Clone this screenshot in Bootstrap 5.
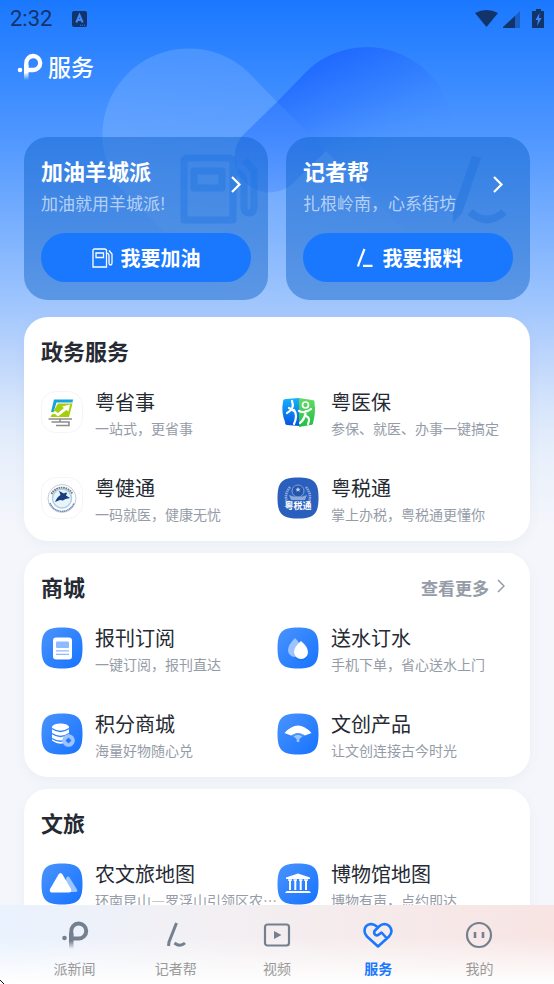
<!DOCTYPE html>
<html lang="zh-CN">
<head>
<meta charset="utf-8">
<meta name="viewport" content="width=device-width, initial-scale=1">
<title>服务</title>
<link rel="stylesheet" href="https://cdn.jsdelivr.net/npm/bootstrap@5.3.0/dist/css/bootstrap.min.css">
<style>
  body { font-family: "Noto Sans CJK SC", sans-serif; color: #252a33; background: #f4f6fb; }
  a { color: inherit; text-decoration: none; }
  svg { display: block; flex: none; }
  .app-shell { background: linear-gradient(180deg, #1a78ff 0, #4f97ff 137px, #a2c7fd 310px, #bcd5fc 355px, #d8e6fb 410px, #e9f0fb 460px, #f4f6fb 530px); }
  .hero-art { top: 0; left: 0; pointer-events: none; }
  .status-bar { height: 38px; gap: 20px; padding: 0 9px 0 10px; color: #12346b; font: 22px/38px Roboto, sans-serif; }
  .page-title { height: 57px; gap: 5px; padding-left: 16px; margin-bottom: 42px; color: #fff; font-size: 23px; line-height: 56px; font-weight: 500; }
  .page-title span { padding-bottom: 2px; }
  .gutter { padding: 0 24px; }
  .scroll-area { min-height: 0; overflow-y: auto; scrollbar-width: none; }
  .scroll-area::-webkit-scrollbar { display: none; }
  .hero-grid { display: grid; grid-template-columns: 1fr 1fr; gap: 18px; margin-bottom: 17px; }
  .hero-card { padding: 16px 17px 18px; border-radius: 24px; background: rgba(10, 96, 199, .45); color: #fff; }
  .hero-card h2 { font-size: 22px; line-height: 34px; font-weight: 700; }
  .hero-card p { font-size: 17px; line-height: 32px; color: rgba(255, 255, 255, .62); white-space: nowrap; }
  .hero-mark { top: 16px; right: 10px; }
  .hero-btn { height: 49px; margin-top: 14px; background: #1a78ff; color: #fff; font-size: 20px; line-height: 30px; font-weight: 700; }
  .hero-btn:hover { background: #0f6cf0; color: #fff; }
  .panel { padding: 17px 17px 0; margin-bottom: 12px; border-radius: 24px; background: #fff; box-shadow: 0 4px 12px rgba(80, 90, 130, .05); }
  .panel h2 { margin-bottom: 2px; font-size: 22px; line-height: 33px; font-weight: 700; }
  .see-more { color: #959ca7; font-size: 17px; line-height: 35px; font-weight: 700; padding-right: 8px; }
  .service { height: 86px; gap: 12px; }
  .service-text { min-width: 0; padding-top: 4px; }
  .service-name { font-size: 20px; line-height: 28px; }
  .service-desc { font-size: 14px; line-height: 24px; color: #959ca7; }
  .tab-bar { height: 79px; background: linear-gradient(180deg, rgba(255,255,255,0) 40%, #fff 100%), linear-gradient(90deg, #e9f2fe 0, #f2f0f4 35%, #f6eaea 70%, #f7e4e3 100%); }
  .tab { flex: 1 1 0; padding-top: 15px; gap: 8px; font-size: 14px; line-height: 21px; color: #999; }
  .tab-icon { color: #75808f; }
  .tab.active, .tab.active .tab-icon { color: #1a78ff; }
  .tab.active { font-weight: 700; }
  .resize-mark { left: 0; bottom: 0; }
</style>
</head>
<body>
<div class="app-shell vh-100 d-flex flex-column position-relative overflow-hidden">

  <svg class="hero-art position-absolute" width="554" height="420" viewBox="0 0 554 420" aria-hidden="true">
    <defs>
      <linearGradient id="loopLight" gradientUnits="userSpaceOnUse" x1="160" y1="50" x2="240" y2="320">
        <stop offset="0" stop-color="#fff" stop-opacity=".14"/><stop offset=".45" stop-color="#fff" stop-opacity=".1"/><stop offset="1" stop-color="#fff" stop-opacity="0"/>
      </linearGradient>
      <linearGradient id="loopDark" gradientUnits="userSpaceOnUse" x1="320" y1="50" x2="380" y2="175">
        <stop offset="0" stop-color="#1a62ff" stop-opacity=".9"/><stop offset=".45" stop-color="#2f78ff" stop-opacity=".6"/><stop offset=".8" stop-color="#4089ff" stop-opacity=".1"/><stop offset="1" stop-color="#4f95ff" stop-opacity="0"/>
      </linearGradient>
      <linearGradient id="loopTail" gradientUnits="userSpaceOnUse" x1="290" y1="100" x2="290" y2="195">
        <stop offset="0" stop-color="#1f6cff" stop-opacity=".6"/><stop offset="1" stop-color="#1f6cff" stop-opacity=".22"/>
      </linearGradient>
      <linearGradient id="logoFade" x1="0" y1="0" x2="0" y2="1">
        <stop offset=".5" stop-color="#fff"/><stop offset="1" stop-color="#fff" stop-opacity="0"/>
      </linearGradient>
      <linearGradient id="tabFade" x1="0" y1="0" x2="0" y2="1">
        <stop offset=".5" stop-color="#75808f"/><stop offset="1" stop-color="#75808f" stop-opacity="0"/>
      </linearGradient>
    </defs>
    <path d="M277 102L248 72A86.300 86.300 0 0 0 126 194L252 320H495Z" fill="url(#loopLight)"/>
    <path d="M277 102L306 72A86.300 86.300 0 0 1 453 133L428 194H369Z" fill="url(#loopDark)"/>
    <path d="M277 102L241.500 136.500A35 35 0 0 0 290.500 185.500L326 151Z" fill="url(#loopTail)"/>
  </svg>

  <header class="position-relative">
    <div class="status-bar d-flex align-items-center">
      <span>2:32</span>
      <svg width="15" height="16" viewBox="0 0 15 16" aria-hidden="true"><rect width="15" height="16" rx="2" fill="#12346b"/><path d="M4.300 11.500L7.500 4L10.700 11.500M5.500 9H9.500" stroke="#3f88f5" stroke-width="2" fill="none"/><path d="M8 14.200h6" stroke="#3f88f5" stroke-width=".9" stroke-dasharray="1 1"/></svg>
      <svg class="ms-auto" width="70" height="22" viewBox="0 0 70 22" aria-hidden="true" fill="#12346b">
        <path d="M0 5Q11.500-1 23 5L11.500 19Z"/>
        <path d="M45 3V20H28Z" fill-opacity=".4"/><path d="M40 8V20H28V19Z"/>
        <path d="M61 1h5v2h3v17H57V3h4Z"/><path d="M64.500 5L60.500 12H63L62 18L66.500 10H64Z" fill="#3c87f8"/>
      </svg>
    </div>
    <h1 class="page-title d-flex align-items-center">
      <svg width="27" height="28" viewBox="0 0 27 28" aria-hidden="true">
        <circle cx="4" cy="17" r="2.300" fill="#fff"/><rect x="8" y="12" width="4.500" height="15" fill="url(#logoFade)"/>
        <path d="M10.250 18V10.500A7 7 0 1 1 17 17H12" fill="none" stroke="#fff" stroke-width="4.300"/>
      </svg>
      <span>服务</span>
    </h1>
  </header>

  <main class="scroll-area gutter flex-grow-1 position-relative">
    <div class="hero-grid">
      <section class="hero-card position-relative">
        <svg class="hero-mark position-absolute" width="78" height="72" viewBox="0 0 78 72" fill="none" stroke="#1c74e4" stroke-opacity=".4" stroke-width="7" stroke-linejoin="round" aria-hidden="true">
          <path d="M4 67V9Q4 5 8 5H48Q53 5 53 10V67ZM14 18H42V35H14ZM53 20Q63 18 64 29V53Q64 60 69 60T74 53V18L65 7"/>
        </svg>
        <a href="#" class="position-relative d-flex align-items-center justify-content-between">
          <div><h2 class="m-0">加油羊城派</h2><p class="m-0">加油就用羊城派!</p></div>
          <svg class="me-2 mb-1" width="12" height="18" viewBox="0 0 12 18" fill="none" stroke="#fff" stroke-width="2.200" aria-hidden="true"><path d="M1 2L8.500 9.500L1 17"/></svg>
        </a>
        <button type="button" class="hero-btn btn border-0 rounded-pill w-100 d-flex align-items-center justify-content-center gap-2 p-0 position-relative">
          <svg width="21" height="20" viewBox="0 0 21 20" fill="none" stroke="#fff" stroke-width="1.300" aria-hidden="true"><path d="M1 19V2.500Q1 1 2.500 1H12.500Q14.500 1 14.500 3V19ZM4 5H11.500V9.500H4ZM14.500 5.500Q17 5 17 8V15Q17 17 18.500 17T20 15V6L17 2.500"/></svg>
          <span>我要加油</span>
        </button>
      </section>
      <section class="hero-card position-relative">
        <svg class="hero-mark position-absolute" width="70" height="72" viewBox="0 0 70 72" fill="none" stroke="#1c6edb" stroke-opacity=".4" aria-hidden="true">
          <path d="M22 3L31 5L12 60L3 70L3 57Z" fill="#1c6edb" fill-opacity=".4" stroke="none"/><path d="M20 59Q37 74 54 59" stroke-width="7.500"/>
        </svg>
        <a href="#" class="position-relative d-flex align-items-center justify-content-between">
          <div><h2 class="m-0">记者帮</h2><p class="m-0">扎根岭南，心系街坊</p></div>
          <svg class="me-2 mb-1" width="12" height="18" viewBox="0 0 12 18" fill="none" stroke="#fff" stroke-width="2.200" aria-hidden="true"><path d="M1 2L8.500 9.500L1 17"/></svg>
        </a>
        <button type="button" class="hero-btn btn border-0 rounded-pill w-100 d-flex align-items-center justify-content-center gap-2 p-0 position-relative">
          <svg width="21" height="20" viewBox="0 0 21 20" fill="none" stroke="#fff" stroke-width="2.200" aria-hidden="true"><path d="M10.500 1L5 15L4 18.500M9 17.800H18.500"/></svg>
          <span>我要报料</span>
        </button>
      </section>
    </div>

    <section class="panel">
      <h2>政务服务</h2>
      <div class="row g-0">
        <a href="#" class="service col-6 d-flex align-items-center">
          <svg width="42" height="42" viewBox="0 0 42 42" aria-hidden="true">
            <rect x=".5" y=".5" width="41" height="41" rx="14" fill="#fff" stroke="#f4f5f7"/>
            <path d="M13 8.500H32L31.500 11.500H15.500L12.500 21H10Z" fill="#12a3e0"/><path d="M17 12.500H31.500L28 26H9.500L12.500 20Z" fill="#a5cf0a"/>
            <path d="M10 23.500L14 20L17 22L23 17L21 15.500L29 13.500L27.500 20.500L25.500 19L17 25.500L14 23Z" fill="#fff"/>
            <path d="M7.500 28H31M10.500 31H28V34.500H15M19 31V28" fill="none" stroke="#8d8d8d" stroke-width="1.600"/>
          </svg>
          <div class="service-text"><div class="service-name">粤省事</div><div class="service-desc text-truncate">一站式，更省事</div></div>
        </a>
        <a href="#" class="service col-6 d-flex align-items-center">
          <svg width="42" height="42" viewBox="0 0 42 42" aria-hidden="true">
            <defs><linearGradient id="medBlue" x1="0" y1="0" x2="0" y2="1"><stop stop-color="#16b2ff"/><stop offset="1" stop-color="#0553e0"/></linearGradient><linearGradient id="medGreen" x1="0" y1="0" x2="0" y2="1"><stop stop-color="#65dc63"/><stop offset="1" stop-color="#20bd4a"/></linearGradient></defs>
            <path d="M6 11Q6 8 9 8L22 7V35L10 34Q8 34 8 31Q4 21 6 11Z" fill="url(#medBlue)"/><path d="M22 7L35 9Q38 9 37.500 12Q39 21 36 32Q36 34 33 34L22 36Z" fill="url(#medGreen)"/>
            <path d="M15 10Q18 18 10 22M17 19Q21 24 17 33M17 20L12 17" stroke="#fff" stroke-width="2.200" fill="none" stroke-linecap="round"/>
            <circle cx="28.500" cy="14" r="3" stroke="#fff" stroke-width="1.700" fill="none"/><path d="M22 20Q28 23 34 18M29 20Q28 28 23 32M29 25Q34 27 31 33" stroke="#fff" stroke-width="2.200" fill="none" stroke-linecap="round"/>
          </svg>
          <div class="service-text"><div class="service-name">粤医保</div><div class="service-desc text-truncate">参保、就医、办事一键搞定</div></div>
        </a>
        <a href="#" class="service col-6 d-flex align-items-center">
          <svg width="42" height="42" viewBox="0 0 42 42" aria-hidden="true">
            <rect x=".5" y=".5" width="41" height="41" rx="14" fill="#fff" stroke="#f4f5f7"/>
            <circle cx="21" cy="21.500" r="14" fill="none" stroke="#b3bdd6" stroke-width=".8"/>
            <path d="M10.500 17A12 12 0 0 1 31.500 17" fill="none" stroke="#77777c" stroke-width="2.200" stroke-dasharray="1.600 .7"/>
            <path d="M9 26A12.800 12.800 0 0 0 33 26" fill="none" stroke="#7187b2" stroke-width="1.400" stroke-dasharray="1.500 .4"/>
            <circle cx="21" cy="21.500" r="9.500" fill="#e8f4f9" stroke="#a5d2e4" stroke-width="1.500"/>
            <path d="M14 25Q16 20 19.500 18L18 14L23 16.500Q25 15 26 16L25 18.500L29 21L24.500 22L22 23.500L19 23Z" fill="#193d80"/>
          </svg>
          <div class="service-text"><div class="service-name">粤健通</div><div class="service-desc text-truncate">一码就医，健康无忧</div></div>
        </a>
        <a href="#" class="service col-6 d-flex align-items-center">
          <svg width="42" height="42" viewBox="0 0 42 42" aria-hidden="true">
            <path d="M21 0.500C37 .5 41.500 5 41.500 21S37 41.500 21 41.500S.5 37 .5 21S5 .5 21 .5Z" fill="#2b5fbe"/>
            <path d="M13 10Q5 20 13 30M29 10Q37 20 29 30" fill="none" stroke="#8aa9dd" stroke-width="2.600" stroke-dasharray="1.500 .7"/>
            <circle cx="21" cy="14" r="6" fill="#2656ac" stroke="#7e9fd8" stroke-width="1"/><path d="M21 10l.8 1.700h1.700l-1.300 1.200.5 1.800-1.700-1-1.700 1 .5-1.800-1.300-1.200h1.700Z" fill="#c3d3ef"/><path d="M12 18Q21 22 30 18L28 23H14Z" fill="#8aa9dd"/>
            <text x="21" y="32" text-anchor="middle" font-size="9" font-weight="700" fill="#fff">粤税通</text>
          </svg>
          <div class="service-text"><div class="service-name">粤税通</div><div class="service-desc text-truncate">掌上办税，粤税通更懂你</div></div>
        </a>
      </div>
    </section>

    <section class="panel">
      <div class="d-flex justify-content-between">
        <h2>商城</h2>
        <a href="#" class="see-more d-flex align-items-center gap-2">查看更多 <svg class="mb-1" width="8" height="14" viewBox="0 0 8 14" fill="none" stroke="#959ca7" stroke-width="1.500" aria-hidden="true"><path d="M1 1L7 7L1 13"/></svg></a>
      </div>
      <div class="row g-0">
        <a href="#" class="service col-6 d-flex align-items-center">
          <svg width="42" height="42" viewBox="0 0 42 42" aria-hidden="true">
            <defs>
              <linearGradient id="tileBlue" x1="0" y1="0" x2="1" y2="1"><stop stop-color="#4a93fd"/><stop offset="1" stop-color="#1673ff"/></linearGradient>
              <path id="tile" d="M21 0.500C37 .5 41.500 5 41.500 21S37 41.500 21 41.500S.5 37 .5 21S5 .5 21 .5Z" fill="url(#tileBlue)"/>
            </defs>
            <use href="#tile"/>
            <rect x="12" y="11.500" width="19" height="22" rx="3" fill="#0c5cd8" opacity=".25"/><rect x="12" y="10.500" width="19" height="22" rx="3" fill="#fff"/><rect x="15" y="14.500" width="13" height="6.500" rx="1" fill="#8dbbff"/><path d="M15 23.800H28M15 27.300H28" stroke="#8dbbff" stroke-width="1.300"/>
          </svg>
          <div class="service-text"><div class="service-name">报刊订阅</div><div class="service-desc text-truncate">一键订阅，报刊直达</div></div>
        </a>
        <a href="#" class="service col-6 d-flex align-items-center">
          <svg width="42" height="42" viewBox="0 0 42 42" aria-hidden="true"><use href="#tile"/>
            <path d="M18 11Q25 18 25 23A7 7 0 0 1 11 23Q11 18 18 11Z" fill="#9cc5ff"/>
            <path d="M24 15Q31 22 31 27A7 7 0 0 1 17 27Q17 22 24 15Z" fill="#0c5cd8" opacity=".25"/><path d="M24 14Q31 20 31 25A7 7 0 0 1 17 25Q17 20 24 14Z" fill="#fff"/>
          </svg>
          <div class="service-text"><div class="service-name">送水订水</div><div class="service-desc text-truncate">手机下单，省心送水上门</div></div>
        </a>
        <a href="#" class="service col-6 d-flex align-items-center">
          <svg width="42" height="42" viewBox="0 0 42 42" aria-hidden="true"><use href="#tile"/>
            <path d="M11 14V27.500Q19.500 34 28 27.500V14Z" fill="#fff"/><ellipse cx="19.500" cy="14" rx="8.500" ry="3.500" fill="#fff"/>
            <path d="M11 15.500Q19.500 21.500 28 15.500M11 20.500Q19.500 26.500 28 20.500M11 25.500Q19.500 31 28 25.500" fill="none" stroke="#2f80fd" stroke-width="1.300"/>
            <circle cx="27.500" cy="27.500" r="6.300" fill="#9cc5ff"/><path d="M27.500 24.500L30.500 27.500L27.500 30.500L24.500 27.500Z" fill="#2479fb"/>
          </svg>
          <div class="service-text"><div class="service-name">积分商城</div><div class="service-desc text-truncate">海量好物随心兑</div></div>
        </a>
        <a href="#" class="service col-6 d-flex align-items-center">
          <svg width="42" height="42" viewBox="0 0 42 42" aria-hidden="true"><use href="#tile"/>
            <path d="M7.500 20Q21 5 34.500 20L28 22.500Q21 17.500 14 22.500Z" fill="#fff"/>
            <path d="M16.500 23.500Q21 20 25.500 23.500L22.300 26V29H19.700V26Z" fill="#9cc5ff"/><path d="M15.500 23Q21 18 26.500 23" fill="none" stroke="#6aa6fe" stroke-width="1"/>
          </svg>
          <div class="service-text"><div class="service-name">文创产品</div><div class="service-desc text-truncate">让文创连接古今时光</div></div>
        </a>
      </div>
    </section>

    <section class="panel">
      <h2>文旅</h2>
      <div class="row g-0">
        <a href="#" class="service col-6 d-flex align-items-center">
          <svg width="42" height="42" viewBox="0 0 42 42" aria-hidden="true"><use href="#tile"/>
            <path d="M25.500 14.500Q27 12.500 28.500 14.500L36 26.500Q37 29 34.500 29H22Z" fill="#9cc5ff"/>
            <path d="M17.500 11.500Q19.500 8.500 21.500 11.500L30 26Q31 29.500 28 29.500H11Q8 29.500 9 26Z" fill="#fff"/>
          </svg>
          <div class="service-text"><div class="service-name">农文旅地图</div><div class="service-desc text-truncate">环南昆山—罗浮山引领区农文旅地图</div></div>
        </a>
        <a href="#" class="service col-6 d-flex align-items-center">
          <svg width="42" height="42" viewBox="0 0 42 42" aria-hidden="true"><use href="#tile"/>
            <path d="M21 10.500L33 14.500V16H9V14.500ZM9.500 28H32.500L34 30H8Z" fill="#fff"/>
            <path d="M13 17V27M18.300 17V27M23.700 17V27M29 17V27" stroke="#fff" stroke-width="2"/><path d="M11 17H15M16.500 17H20M22 17H25.500M27 17H31" stroke="#fff" stroke-width="1.500"/>
          </svg>
          <div class="service-text"><div class="service-name">博物馆地图</div><div class="service-desc text-truncate">博物有声，点约即达</div></div>
        </a>
      </div>
    </section>
  </main>

  <nav class="tab-bar gutter d-flex position-relative flex-shrink-0">
    <a href="#" class="tab d-flex flex-column align-items-center">
      <svg class="tab-icon" width="28" height="30" viewBox="0 0 28 30" aria-hidden="true">
        <circle cx="3.500" cy="18" r="2.300" fill="currentColor"/><rect x="8" y="13" width="4.500" height="16" fill="url(#tabFade)"/>
        <path d="M10.250 19V11.500A7.500 7.500 0 1 1 17.500 18.500H12" fill="none" stroke="currentColor" stroke-width="4"/>
      </svg>
      <span>派新闻</span>
    </a>
    <a href="#" class="tab d-flex flex-column align-items-center">
      <svg class="tab-icon" width="28" height="30" viewBox="0 0 28 30" fill="none" stroke="currentColor" stroke-width="3" aria-hidden="true"><path d="M14.500 3L7 22L6.500 26M12.500 23Q18 27.500 23 23"/></svg>
      <span>记者帮</span>
    </a>
    <a href="#" class="tab d-flex flex-column align-items-center">
      <svg class="tab-icon" width="28" height="30" viewBox="0 0 28 30" fill="none" stroke="currentColor" stroke-width="2.200" aria-hidden="true"><rect x="2" y="4.500" width="24" height="21" rx="2.500"/><path d="M11 11L18.500 15L11 19Z" fill="currentColor" stroke="none"/></svg>
      <span>视频</span>
    </a>
    <a href="#" class="tab active d-flex flex-column align-items-center" aria-current="page">
      <svg class="tab-icon" width="32" height="30" viewBox="0 0 32 30" fill="none" stroke="currentColor" stroke-width="2.600" stroke-linejoin="round" aria-hidden="true"><path d="M16 7.500Q12.500 4 8.500 4Q2.500 5 2.500 11Q2.500 14 5 16.500L16 26.500L27 16.500Q29.500 14 29.500 11Q28.500 4.500 22.500 4Q19.500 4 17 6.500L12.500 11Q11.500 13.500 13.500 15Q15.500 16 17.500 14L19.500 12.500L24.500 18"/></svg>
      <span>服务</span>
    </a>
    <a href="#" class="tab d-flex flex-column align-items-center">
      <svg class="tab-icon" width="28" height="30" viewBox="0 0 28 30" fill="none" stroke="currentColor" stroke-width="2.200" aria-hidden="true"><circle cx="14" cy="15" r="12"/><path d="M10 12V18M18 12V18" stroke-width="2.600"/></svg>
      <span>我的</span>
    </a>
    <svg class="resize-mark position-absolute" width="4" height="5" viewBox="0 0 4 5" aria-hidden="true"><path d="M0 1H1V2H2V3H3V4H4V5H3V4H2V3H1V2H0Z" fill="#111"/></svg>
  </nav>
</div>
<script src="https://cdn.jsdelivr.net/npm/bootstrap@5.3.0/dist/js/bootstrap.bundle.min.js"></script>
</body>
</html>
